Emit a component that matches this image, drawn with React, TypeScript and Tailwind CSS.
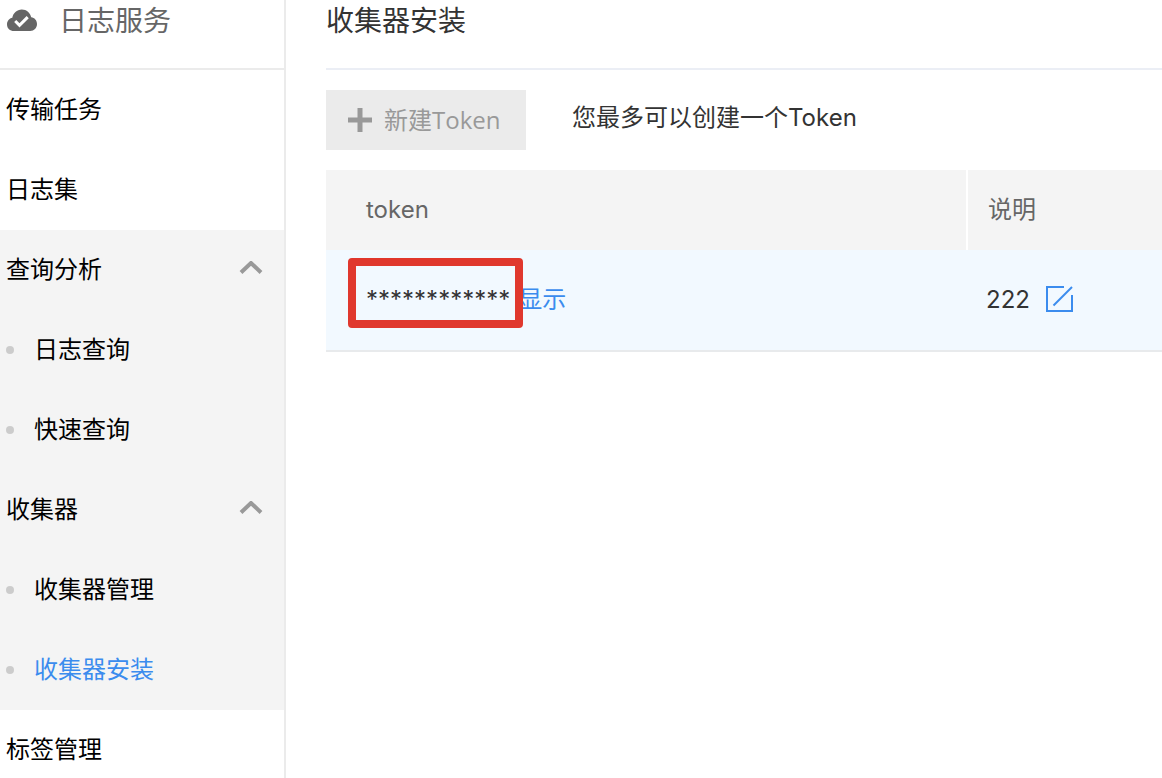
import { useState } from "react";

const menu = [
  { label: "传输任务" },
  { label: "日志集" },
  { label: "查询分析", children: ["日志查询", "快速查询"] },
  { label: "收集器", children: ["收集器管理", "收集器安装"] },
  { label: "标签管理" },
];

const CloudIcon = () => (
  <svg width="30" height="26" viewBox="0 0 30 26" aria-hidden="true">
    <path
      fill="#666"
      d="M7 22C3 22 0 19.2 0 15.4c0-3.400 2.300-6 5.300-6.600C6 4 9.900.4 14.800.4c4.800 0 8.600 3.300 9.400 7.900 3.300.3 5.800 3.200 5.800 6.700 0 4-3 7-6.800 7z"
    />
    <path d="M8.200 12l4.300 4.300 8.200-8.200" fill="none" stroke="#fff" strokeWidth="3" />
  </svg>
);

const EditIcon = () => (
  <svg width="28" height="28" viewBox="0 0 28 28" fill="none" stroke="#3b8cee" strokeWidth="2" aria-hidden="true">
    <path d="M18 1H1v24h25V9" />
    <path d="M7.500 19.500L26 1" />
  </svg>
);

const Sidebar = () => {
  const [closed, setClosed] = useState<string[]>([]);
  const active = "收集器安装";

  const toggle = (label: string) => {
    setClosed(
      closed.includes(label)
        ? closed.filter((l) => l !== label)
        : [...closed, label]
    );
  };

  return (
    <aside className="w-[286px] shrink-0 border-r-2 border-[#ebebeb]">
      <div className="flex h-[70px] items-center gap-[22px] border-b-2 border-[#ebebeb] pb-6 pl-[7px] text-[28px] text-[#666]">
        <CloudIcon />
        <span>日志服务</span>
      </div>
      <nav className="text-black">
        {menu.map((item) =>
          item.children ? (
            <div key={item.label} className="bg-[#f4f4f4]">
              <button
                onClick={() => toggle(item.label)}
                aria-expanded={!closed.includes(item.label)}
                className="flex h-20 w-full cursor-pointer items-center justify-between pr-5 pl-1.5"
              >
                {item.label}
                <svg width="26" height="18" viewBox="0 0 26 18" aria-hidden="true">
                  <path d="M3 11.500L13 2l10 9.500" fill="none" stroke="#999" strokeWidth="4" />
                </svg>
              </button>
              {!closed.includes(item.label) &&
                item.children.map((child) => (
                  <a
                    key={child}
                    href="#"
                    className={`flex h-20 items-center gap-5 pl-1.5 ${
                      child === active ? "text-[#3b8cee]" : ""
                    }`}
                  >
                    <span className="h-2 w-2 rounded-full bg-[#ccc]" />
                    {child}
                  </a>
                ))}
            </div>
          ) : (
            <a key={item.label} href="#" className="flex h-20 items-center pl-1.5">
              {item.label}
            </a>
          )
        )}
      </nav>
    </aside>
  );
};

const App = () => {
  return (
    <div className="flex h-screen overflow-hidden bg-white font-[Inter,'Noto_Sans_CJK_SC',sans-serif] text-2xl text-[#333]">
      <Sidebar />
      <main className="min-w-0 flex-1 pl-10">
        <h1 className="flex h-[70px] items-center border-b-2 border-[#ebeef5] pb-6 text-[28px]">
          收集器安装
        </h1>

        <div className="flex py-5">
          <button
            disabled
            className="flex h-[60px] w-[200px] items-center gap-3 bg-[#ebebeb] pl-[22px] font-['Open_Sans','Noto_Sans_CJK_SC',sans-serif] text-[#999]"
          >
            <svg width="24" height="24" viewBox="0 0 24 24" aria-hidden="true">
              <path d="M12 0v24M0 12h24" stroke="#999" strokeWidth="5" />
            </svg>
            新建Token
          </button>
          <p className="ml-[46px] flex h-14 items-center">您最多可以创建一个Token</p>
        </div>

        <table className="w-full table-fixed border-separate border-spacing-0 text-left">
          <thead>
            <tr className="h-20 bg-[#f4f4f4] text-[#666]">
              <th className="w-[642px] border-r-2 border-white p-0 pl-10 font-normal">token</th>
              <th className="p-0 pl-5 font-normal">说明</th>
            </tr>
          </thead>
          <tbody>
            <tr className="h-[102px] bg-[#f2f9ff]">
              <td className="relative border-b-2 border-[#e8eaec] p-0 pl-10">
                <div className="flex items-center gap-2">
                  <span>************</span>
                  <button className="cursor-pointer text-[#3b8cee]">显示</button>
                </div>
                <div className="pointer-events-none absolute top-2 left-[22px] h-[70px] w-[175px] rounded border-8 border-[#e0382e]" />
              </td>
              <td className="border-b-2 border-[#e8eaec] p-0 pl-[18px]">
                <div className="flex items-center gap-4">
                  <span>222</span>
                  <button aria-label="编辑" className="cursor-pointer">
                    <EditIcon />
                  </button>
                </div>
              </td>
            </tr>
          </tbody>
        </table>
      </main>
    </div>
  );
};

export default App;
